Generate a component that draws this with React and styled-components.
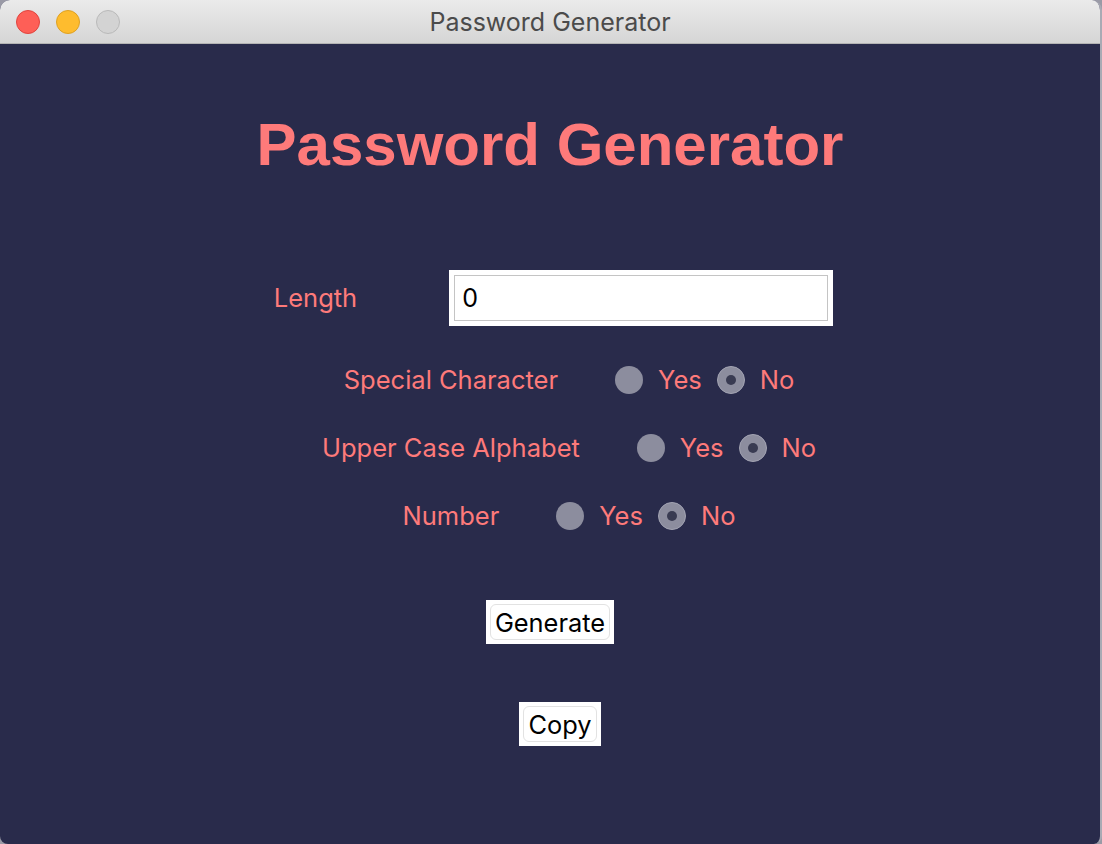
import React, { useState } from 'react'
import styled, { createGlobalStyle } from 'styled-components'

const GlobalStyle = createGlobalStyle`
  html, body {
    margin: 0;
    padding: 0;
    background: #9a9aa6;
  }
  body {
    font-family: Inter, "Liberation Sans", sans-serif;
  }
`

const Window = styled.div`
  width: 1102px;
  height: 844px;
  display: flex;
  flex-direction: column;
  border-radius: 10px 10px 8px 8px;
  overflow: hidden;
  box-sizing: border-box;
  border-right: 2px solid #a9aab4;
  background: #292b4b;
`

const TitleBar = styled.div`
  position: relative;
  height: 44px;
  flex-shrink: 0;
  display: flex;
  align-items: center;
  justify-content: center;
  background: linear-gradient(#ebebeb, #d5d5d5);
  border-bottom: 1px solid #b4b4b4;
  box-sizing: border-box;
  color: #4b4b4b;
  font-size: 25px;
`

const Lights = styled.div`
  position: absolute;
  left: 16px;
  top: 10px;
  display: flex;
  gap: 16px;
`

const Light = styled.span`
  width: 24px;
  height: 24px;
  border-radius: 50%;
  box-sizing: border-box;
  background: ${p => p.$color};
  border: 1px solid ${p => p.$edge};
`

const Content = styled.div`
  flex: 1;
  display: flex;
  flex-direction: column;
  align-items: center;
  padding-top: 66px;
  color: #fe7a7a;
`

const Heading = styled.h1`
  margin: 0;
  font-family: "Liberation Sans", Arial, sans-serif;
  font-weight: bold;
  font-size: 60px;
  line-height: 70px;
  color: #fe7a7a;
`

const Row = styled.div`
  display: flex;
  align-items: center;
  justify-content: center;
  align-self: stretch;
  gap: ${p => p.$gap}px;
  padding-left: ${p => p.$shift}px;
  margin-top: ${p => p.$top}px;
  height: ${p => p.$h}px;
`

const Label = styled.span`
  font-size: 25.5px;
  line-height: 30px;
  white-space: nowrap;
`

const InputFrame = styled.div`
  width: 384px;
  height: 56px;
  box-sizing: border-box;
  padding: 5px;
  background: #fff;
`

const Input = styled.input`
  width: 100%;
  height: 100%;
  box-sizing: border-box;
  border: 1px solid #c4c4c4;
  outline: none;
  padding: 0 0 0 7px;
  font-family: Inter, "Liberation Sans", sans-serif;
  font-size: 25px;
  color: #000;
  background: #fff;
`

const Group = styled.div`
  display: flex;
  align-items: center;
  gap: 15px;
`

const Radio = styled.span`
  width: 28px;
  height: 28px;
  border-radius: 50%;
  box-sizing: border-box;
  background: #8c8d9e;
  border: ${p => (p.$on ? '1px solid #a3a4b3' : 'none')};
  display: flex;
  align-items: center;
  justify-content: center;
  cursor: pointer;

  &::after {
    content: '';
    display: ${p => (p.$on ? 'block' : 'none')};
    width: 10px;
    height: 10px;
    border-radius: 50%;
    background: #393b52;
  }
`

const ButtonFrame = styled.div`
  margin-top: ${p => p.$top}px;
  margin-left: ${p => p.$shift || 0}px;
  height: 44px;
  box-sizing: border-box;
  padding: 4px;
  background: #fff;
  display: flex;
`

const Button = styled.button`
  border: 1px solid #e2e2e2;
  border-radius: 6px;
  background: #fff;
  padding: 0 4px;
  font-family: Inter, "Liberation Sans", sans-serif;
  font-size: 25.4px;
  color: #000;
  cursor: pointer;
`

const options = [
  { key: 'special', label: 'Special Character' },
  { key: 'upper', label: 'Upper Case Alphabet' },
  { key: 'number', label: 'Number' },
]

const App = () => {
  const [length, setLength] = useState('0')
  const [choice, setChoice] = useState({ special: false, upper: false, number: false })

  return (
    <Window>
      <GlobalStyle />
      <TitleBar>
        <Lights>
          <Light $color="#fe5f57" $edge="#e0443e" />
          <Light $color="#febc2e" $edge="#dea123" />
          <Light $color="#d3d3d3" $edge="#b9b9b9" />
        </Lights>
        Password Generator
      </TitleBar>

      <Content>
        <Heading>Password Generator</Heading>

        {/* LENGTH */}
        <Row $gap={92} $shift={7} $top={90} $h={56}>
          <Label>Length</Label>
          <InputFrame>
            <Input value={length} onChange={e => setLength(e.target.value)} />
          </InputFrame>
        </Row>

        {/* OPTIONS */}
        {options.map((o, i) => (
          <Row key={o.key} $gap={57} $shift={38} $top={i === 0 ? 36 : 32} $h={36}>
            <Label>{o.label}</Label>
            <Group>
              <Radio $on={choice[o.key]} onClick={() => setChoice({ ...choice, [o.key]: true })} />
              <Label>Yes</Label>
              <Radio $on={!choice[o.key]} onClick={() => setChoice({ ...choice, [o.key]: false })} />
              <Label>No</Label>
            </Group>
          </Row>
        ))}

        <ButtonFrame $top={66}>
          <Button>Generate</Button>
        </ButtonFrame>
        <ButtonFrame $top={58} $shift={20}>
          <Button>Copy</Button>
        </ButtonFrame>
      </Content>
    </Window>
  )
}

export default App
